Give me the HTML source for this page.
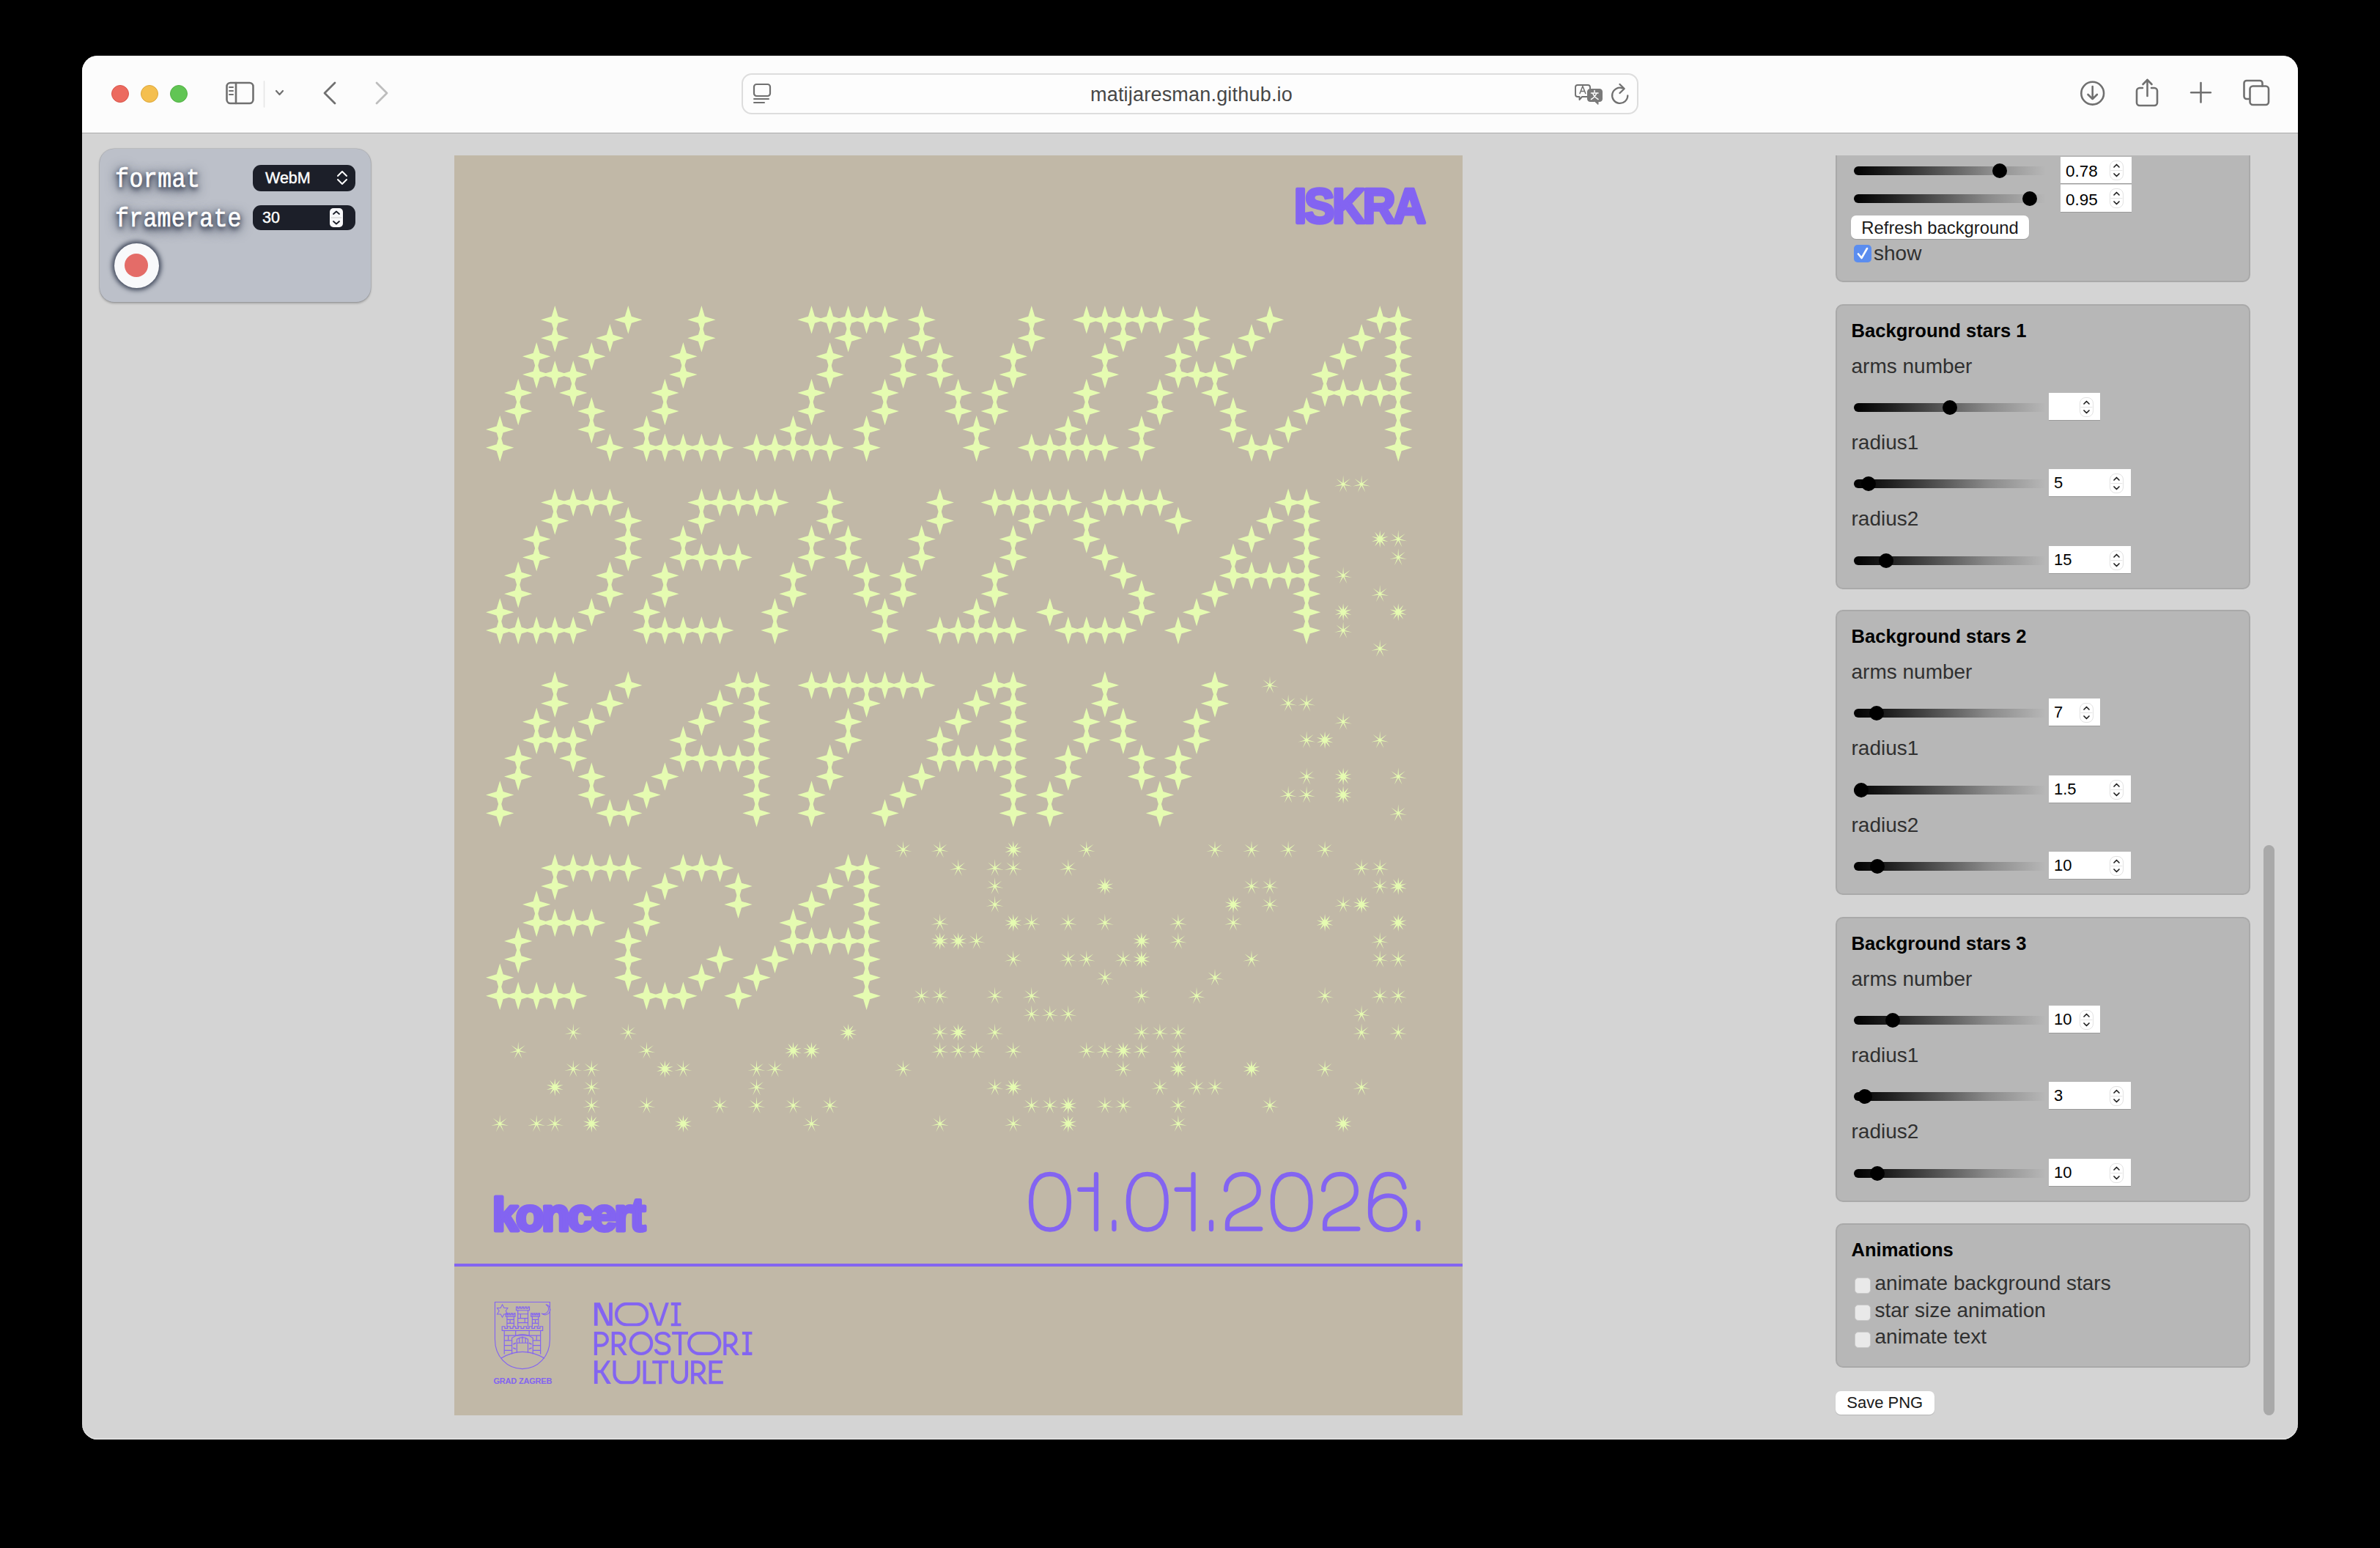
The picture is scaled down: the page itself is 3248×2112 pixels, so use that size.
<!DOCTYPE html>
<html><head><meta charset="utf-8">
<style>
*{margin:0;padding:0;box-sizing:border-box}
html,body{width:3248px;height:2112px;background:#000;overflow:hidden;font-family:"Liberation Sans",sans-serif}
.a{position:absolute}
#win{position:absolute;left:112px;top:76px;width:3024px;height:1888px;border-radius:21px;background:#D4D4D4;overflow:hidden;box-shadow:inset 0 -1.5px 0 #E6E6E6}
#tb{position:absolute;left:0;top:0;width:3024px;height:105.5px;background:#FCFCFC;border-bottom:1.5px solid #ABABAB}
.tl{position:absolute;width:24px;height:24px;border-radius:50%}
.lbl{position:absolute;font-size:28px;color:#303030;white-space:nowrap}
.hd{position:absolute;font-size:25.6px;font-weight:bold;color:#000;white-space:nowrap}
.box{position:absolute;left:2505px;width:566px;background:#B7B7B7;border:2px solid #A9A9A9;border-radius:10px}
.trk{position:absolute;left:2530px;width:262px;height:12px;border-radius:6px 0 0 6px;background:linear-gradient(90deg,#000 0%,#222 20%,#555 45%,#8a8a8a 70%,#b7b7b7 100%)}
.thm{position:absolute;width:20px;height:20px;border-radius:50%;background:#000}
.inp{position:absolute;left:2796px;height:38px;background:#fff;border-bottom:1.5px solid #9a9a9a;font-size:22px;color:#000;padding-left:7px;line-height:38px}
.spn{position:absolute;width:19px;height:27px;border-radius:8px;border:1px solid #e2e2e2;background:#fff}
.cb{position:absolute;left:2531px;width:22px;height:22px;border-radius:5px;background:#E9E9E9;border:1px solid #c8c8c8}
.mono{position:absolute;font-family:"Liberation Mono",monospace;font-size:31.5px;line-height:40px;color:#fff;white-space:nowrap;transform:scaleY(1.16);transform-origin:0 0;-webkit-text-stroke:0.6px #fff;text-shadow:0 2px 6px #2a3144,0 3px 12px #3a4256,0 3px 17px #4a5266}
</style></head><body>
<div id="win">
 <div id="tb">
  <div class="tl" style="left:40px;top:40px;background:#EC6A5F;border:1px solid #D9564B"></div>
  <div class="tl" style="left:80px;top:40px;background:#F4BF4F;border:1px solid #DDA73A"></div>
  <div class="tl" style="left:120px;top:40px;background:#61C554;border:1px solid #52AF45"></div>
 </div>
</div>
<!-- toolbar icons in page coords -->
<svg class="a" style="left:0;top:0" width="3248" height="190" viewBox="0 0 3248 190" fill="none" stroke="#707070" stroke-width="2.6" stroke-linecap="round" stroke-linejoin="round">
 <!-- sidebar -->
 <rect x="309.5" y="113" width="36" height="28" rx="5"/>
 <line x1="322" y1="113" x2="322" y2="141"/>
 <line x1="313" y1="119" x2="318" y2="119" stroke-width="2"/>
 <line x1="313" y1="124" x2="318" y2="124" stroke-width="2"/>
 <line x1="313" y1="129" x2="318" y2="129" stroke-width="2"/>
 <line x1="360.5" y1="111" x2="360.5" y2="146" stroke="#E4E4E4" stroke-width="1.5"/>
 <polyline points="377,124 381.5,129 386,124" stroke-width="2.2"/>
 <!-- back / forward -->
 <polyline points="457,113 443,127 457,141" stroke-width="2.8"/>
 <polyline points="514,113 528,127 514,141" stroke="#BDBDBD" stroke-width="2.8"/>
 <!-- url bar -->
 <rect x="1013" y="101" width="1222" height="54" rx="13" fill="#FDFDFD" stroke="#DDDDDD" stroke-width="2"/>
 <rect x="1029" y="115" width="22" height="16" rx="3.5" stroke-width="2.2"/>
 <line x1="1029" y1="135" x2="1049" y2="135" stroke-width="2"/>
 <line x1="1029" y1="140" x2="1043" y2="140" stroke-width="2"/>
 <!-- translate -->
 <path d="M2153 116 h14 a3 3 0 0 1 3 3 v10 a3 3 0 0 1 -3 3 h-8 l-3.5 4 v-4 h-2.5 a3 3 0 0 1 -3 -3 v-10 a3 3 0 0 1 3 -3z" stroke-width="1.9"/>
 <path d="M2170 121.5 h13 a3.5 3.5 0 0 1 3.5 3.5 v10 a3.5 3.5 0 0 1 -3.5 3.5 h-2 v4 l-4.5 -4 h-6.5 a3.5 3.5 0 0 1 -3.5 -3.5 v-10 a3.5 3.5 0 0 1 3.5 -3.5z" fill="#7A7A7A" stroke="#7A7A7A" stroke-width="1"/>
 <path d="M2156 127.5 l3.9 -10 l3.9 10 M2157.2 124.5 h5.4" stroke-width="1.5"/>
 <path d="M2171.5 127 h9.5 M2176 123.5 v2 M2173.5 127 q2 5 7.5 8.5 M2179 127 q-2 5 -7.5 8.5" stroke="#fff" stroke-width="1.5"/>
 <!-- reload -->
 <path d="M2221.3 130.5 a10.6 10.6 0 1 1 -7 -10.2" stroke-width="2.3"/>
 <polyline points="2210.5,115 2216.7,121 2210.5,127" stroke-width="2.3"/>
 <!-- download -->
 <circle cx="2855.7" cy="127.2" r="15.4" stroke-width="2.6"/>
 <line x1="2855.7" y1="118" x2="2855.7" y2="134.5"/>
 <polyline points="2849.5,129 2855.7,135 2861.9,129"/>
 <!-- share -->
 <path d="M2924 120 h-4 a4 4 0 0 0 -4 4 v16 a4 4 0 0 0 4 4 h20 a4 4 0 0 0 4 -4 v-16 a4 4 0 0 0 -4 -4 h-4"/>
 <line x1="2930.5" y1="109" x2="2930.5" y2="131"/>
 <polyline points="2924.5,115 2930.5,109 2936.5,115"/>
 <!-- plus -->
 <line x1="3003.5" y1="113" x2="3003.5" y2="139.5"/>
 <line x1="2990.2" y1="126.3" x2="3016.8" y2="126.3"/>
 <!-- tabs -->
 <path d="M3070 135 h-4 a3.5 3.5 0 0 1 -3.5 -3.5 v-18 a3.5 3.5 0 0 1 3.5 -3.5 h18 a3.5 3.5 0 0 1 3.5 3.5 v4"/>
 <rect x="3070.5" y="117.5" width="25.5" height="25.5" rx="4"/>
</svg>
<div class="a" style="left:1488px;top:114px;font-size:27px;color:#474747;white-space:nowrap;letter-spacing:0.2px">matijaresman.github.io</div>

<!-- left record panel -->
<div class="a" style="left:136px;top:203px;width:369.5px;height:209px;border-radius:20px;background:#BCC0C9;box-shadow:0 0 0 0.6px rgba(90,95,110,.3),0 1.5px 3px rgba(0,0,0,.25)"></div>
<div class="mono" style="left:157px;top:223px;letter-spacing:0.5px">format</div>
<div class="mono" style="left:157px;top:276.5px;letter-spacing:0.3px">framerate</div>
<div class="a" style="left:345px;top:225px;width:140px;height:36px;border-radius:11px;background:#1C1F29"></div>
<div class="a" style="left:362px;top:228px;font-size:21.5px;color:#fff;line-height:30px;-webkit-text-stroke:0.4px #fff">WebM</div>
<svg class="a" style="left:455px;top:230px" width="24" height="26" fill="none" stroke="#fff" stroke-width="2" stroke-linecap="round" stroke-linejoin="round"><polyline points="6,10 12,4 18,10"/><polyline points="6,15 12,21 18,15"/></svg>
<div class="a" style="left:345px;top:280px;width:140px;height:34px;border-radius:11px;background:#1C1F29"></div>
<div class="a" style="left:358px;top:282px;font-size:21.5px;color:#fff;line-height:30px;-webkit-text-stroke:0.4px #fff">30</div>
<div class="a" style="left:450px;top:284px;width:18px;height:26px;border-radius:5px;background:#F8F8FA"></div>
<svg class="a" style="left:450px;top:284px" width="18" height="26" fill="none" stroke="#1C1F29" stroke-width="1.8" stroke-linecap="round" stroke-linejoin="round"><polyline points="5,8 9,4.5 13,8"/><line x1="2" y1="13" x2="16" y2="13" stroke="#ccc" stroke-width="1"/><polyline points="5,18 9,21.5 13,18"/></svg>
<div class="a" style="left:155.5px;top:331.5px;width:61px;height:61px;border-radius:50%;background:#F8F9FB;box-shadow:0 0 6px 3px #3F475A"></div>
<div class="a" style="left:170px;top:346px;width:32px;height:32px;border-radius:50%;background:#E46C68"></div>

<!-- poster -->
<svg class="a" style="left:620px;top:212px" width="1376" height="1719" viewBox="620 212 1376 1719">
 <defs>
  <polygon id="s4" points="0.00,-19.20 4.45,-4.45 19.20,0.00 4.45,4.45 0.00,19.20 -4.45,4.45 -19.20,0.00 -4.45,-4.45"/>
  <polygon id="s7" points="0.00,-12.20 0.82,-1.71 9.54,-7.61 1.85,-0.42 11.89,2.71 1.49,1.18 5.29,10.99 0.00,1.90 -5.29,10.99 -1.49,1.18 -11.89,2.71 -1.85,-0.42 -9.54,-7.61 -0.82,-1.71"/>
  <polygon id="s10" points="0.00,-12.00 1.11,-3.42 7.05,-9.71 2.91,-2.12 11.41,-3.71 3.60,0.00 11.41,3.71 2.91,2.12 7.05,9.71 1.11,3.42 0.00,12.00 -1.11,3.42 -7.05,9.71 -2.91,2.12 -11.41,3.71 -3.60,0.00 -11.41,-3.71 -2.91,-2.12 -7.05,-9.71 -1.11,-3.42"/>
 </defs>
 <rect x="620" y="212" width="1376" height="1719" fill="#C1B8A7"/>
 <g fill="#E5FBB1">
<use href="#s4" x="757.3" y="436.3"/>
<use href="#s4" x="857.3" y="436.3"/>
<use href="#s4" x="957.4" y="436.3"/>
<use href="#s4" x="1107.5" y="436.3"/>
<use href="#s4" x="1132.6" y="436.3"/>
<use href="#s4" x="1157.6" y="436.3"/>
<use href="#s4" x="1182.6" y="436.3"/>
<use href="#s4" x="1207.6" y="436.3"/>
<use href="#s4" x="1257.7" y="436.3"/>
<use href="#s4" x="1407.8" y="436.3"/>
<use href="#s4" x="1482.8" y="436.3"/>
<use href="#s4" x="1507.9" y="436.3"/>
<use href="#s4" x="1532.9" y="436.3"/>
<use href="#s4" x="1557.9" y="436.3"/>
<use href="#s4" x="1582.9" y="436.3"/>
<use href="#s4" x="1633.0" y="436.3"/>
<use href="#s4" x="1733.0" y="436.3"/>
<use href="#s4" x="1883.2" y="436.3"/>
<use href="#s4" x="1908.2" y="436.3"/>
<use href="#s4" x="757.3" y="461.2"/>
<use href="#s4" x="832.3" y="461.2"/>
<use href="#s4" x="957.4" y="461.2"/>
<use href="#s4" x="1157.6" y="461.2"/>
<use href="#s4" x="1257.7" y="461.2"/>
<use href="#s4" x="1407.8" y="461.2"/>
<use href="#s4" x="1532.9" y="461.2"/>
<use href="#s4" x="1633.0" y="461.2"/>
<use href="#s4" x="1708.0" y="461.2"/>
<use href="#s4" x="1858.1" y="461.2"/>
<use href="#s4" x="1908.2" y="461.2"/>
<use href="#s4" x="732.2" y="486.2"/>
<use href="#s4" x="807.3" y="486.2"/>
<use href="#s4" x="932.4" y="486.2"/>
<use href="#s4" x="1132.6" y="486.2"/>
<use href="#s4" x="1232.6" y="486.2"/>
<use href="#s4" x="1282.7" y="486.2"/>
<use href="#s4" x="1382.8" y="486.2"/>
<use href="#s4" x="1507.9" y="486.2"/>
<use href="#s4" x="1607.9" y="486.2"/>
<use href="#s4" x="1683.0" y="486.2"/>
<use href="#s4" x="1833.1" y="486.2"/>
<use href="#s4" x="1908.2" y="486.2"/>
<use href="#s4" x="732.2" y="511.1"/>
<use href="#s4" x="757.3" y="511.1"/>
<use href="#s4" x="782.3" y="511.1"/>
<use href="#s4" x="932.4" y="511.1"/>
<use href="#s4" x="1132.6" y="511.1"/>
<use href="#s4" x="1232.6" y="511.1"/>
<use href="#s4" x="1282.7" y="511.1"/>
<use href="#s4" x="1382.8" y="511.1"/>
<use href="#s4" x="1507.9" y="511.1"/>
<use href="#s4" x="1607.9" y="511.1"/>
<use href="#s4" x="1633.0" y="511.1"/>
<use href="#s4" x="1658.0" y="511.1"/>
<use href="#s4" x="1808.1" y="511.1"/>
<use href="#s4" x="1908.2" y="511.1"/>
<use href="#s4" x="707.2" y="536.0"/>
<use href="#s4" x="782.3" y="536.0"/>
<use href="#s4" x="907.4" y="536.0"/>
<use href="#s4" x="1107.5" y="536.0"/>
<use href="#s4" x="1207.6" y="536.0"/>
<use href="#s4" x="1307.7" y="536.0"/>
<use href="#s4" x="1357.7" y="536.0"/>
<use href="#s4" x="1482.8" y="536.0"/>
<use href="#s4" x="1582.9" y="536.0"/>
<use href="#s4" x="1658.0" y="536.0"/>
<use href="#s4" x="1808.1" y="536.0"/>
<use href="#s4" x="1833.1" y="536.0"/>
<use href="#s4" x="1858.1" y="536.0"/>
<use href="#s4" x="1883.2" y="536.0"/>
<use href="#s4" x="1908.2" y="536.0"/>
<use href="#s4" x="707.2" y="561.0"/>
<use href="#s4" x="807.3" y="561.0"/>
<use href="#s4" x="907.4" y="561.0"/>
<use href="#s4" x="1107.5" y="561.0"/>
<use href="#s4" x="1207.6" y="561.0"/>
<use href="#s4" x="1307.7" y="561.0"/>
<use href="#s4" x="1357.7" y="561.0"/>
<use href="#s4" x="1482.8" y="561.0"/>
<use href="#s4" x="1582.9" y="561.0"/>
<use href="#s4" x="1683.0" y="561.0"/>
<use href="#s4" x="1783.1" y="561.0"/>
<use href="#s4" x="1908.2" y="561.0"/>
<use href="#s4" x="682.2" y="585.9"/>
<use href="#s4" x="807.3" y="585.9"/>
<use href="#s4" x="882.4" y="585.9"/>
<use href="#s4" x="1082.5" y="585.9"/>
<use href="#s4" x="1182.6" y="585.9"/>
<use href="#s4" x="1332.7" y="585.9"/>
<use href="#s4" x="1457.8" y="585.9"/>
<use href="#s4" x="1557.9" y="585.9"/>
<use href="#s4" x="1683.0" y="585.9"/>
<use href="#s4" x="1758.1" y="585.9"/>
<use href="#s4" x="1908.2" y="585.9"/>
<use href="#s4" x="682.2" y="610.8"/>
<use href="#s4" x="832.3" y="610.8"/>
<use href="#s4" x="882.4" y="610.8"/>
<use href="#s4" x="907.4" y="610.8"/>
<use href="#s4" x="932.4" y="610.8"/>
<use href="#s4" x="957.4" y="610.8"/>
<use href="#s4" x="982.4" y="610.8"/>
<use href="#s4" x="1032.5" y="610.8"/>
<use href="#s4" x="1057.5" y="610.8"/>
<use href="#s4" x="1082.5" y="610.8"/>
<use href="#s4" x="1107.5" y="610.8"/>
<use href="#s4" x="1132.6" y="610.8"/>
<use href="#s4" x="1182.6" y="610.8"/>
<use href="#s4" x="1332.7" y="610.8"/>
<use href="#s4" x="1407.8" y="610.8"/>
<use href="#s4" x="1432.8" y="610.8"/>
<use href="#s4" x="1457.8" y="610.8"/>
<use href="#s4" x="1482.8" y="610.8"/>
<use href="#s4" x="1507.9" y="610.8"/>
<use href="#s4" x="1557.9" y="610.8"/>
<use href="#s4" x="1708.0" y="610.8"/>
<use href="#s4" x="1733.0" y="610.8"/>
<use href="#s4" x="1908.2" y="610.8"/>
<use href="#s4" x="757.3" y="685.6"/>
<use href="#s4" x="782.3" y="685.6"/>
<use href="#s4" x="807.3" y="685.6"/>
<use href="#s4" x="832.3" y="685.6"/>
<use href="#s4" x="957.4" y="685.6"/>
<use href="#s4" x="982.4" y="685.6"/>
<use href="#s4" x="1007.5" y="685.6"/>
<use href="#s4" x="1032.5" y="685.6"/>
<use href="#s4" x="1057.5" y="685.6"/>
<use href="#s4" x="1132.6" y="685.6"/>
<use href="#s4" x="1282.7" y="685.6"/>
<use href="#s4" x="1357.7" y="685.6"/>
<use href="#s4" x="1382.8" y="685.6"/>
<use href="#s4" x="1407.8" y="685.6"/>
<use href="#s4" x="1432.8" y="685.6"/>
<use href="#s4" x="1457.8" y="685.6"/>
<use href="#s4" x="1507.9" y="685.6"/>
<use href="#s4" x="1532.9" y="685.6"/>
<use href="#s4" x="1557.9" y="685.6"/>
<use href="#s4" x="1582.9" y="685.6"/>
<use href="#s4" x="1758.1" y="685.6"/>
<use href="#s4" x="1783.1" y="685.6"/>
<use href="#s4" x="757.3" y="710.5"/>
<use href="#s4" x="857.3" y="710.5"/>
<use href="#s4" x="957.4" y="710.5"/>
<use href="#s4" x="1132.6" y="710.5"/>
<use href="#s4" x="1282.7" y="710.5"/>
<use href="#s4" x="1407.8" y="710.5"/>
<use href="#s4" x="1482.8" y="710.5"/>
<use href="#s4" x="1607.9" y="710.5"/>
<use href="#s4" x="1733.0" y="710.5"/>
<use href="#s4" x="1783.1" y="710.5"/>
<use href="#s4" x="732.2" y="735.5"/>
<use href="#s4" x="857.3" y="735.5"/>
<use href="#s4" x="932.4" y="735.5"/>
<use href="#s4" x="1107.5" y="735.5"/>
<use href="#s4" x="1157.6" y="735.5"/>
<use href="#s4" x="1257.7" y="735.5"/>
<use href="#s4" x="1382.8" y="735.5"/>
<use href="#s4" x="1482.8" y="735.5"/>
<use href="#s4" x="1708.0" y="735.5"/>
<use href="#s4" x="1783.1" y="735.5"/>
<use href="#s4" x="732.2" y="760.4"/>
<use href="#s4" x="857.3" y="760.4"/>
<use href="#s4" x="932.4" y="760.4"/>
<use href="#s4" x="957.4" y="760.4"/>
<use href="#s4" x="982.4" y="760.4"/>
<use href="#s4" x="1007.5" y="760.4"/>
<use href="#s4" x="1107.5" y="760.4"/>
<use href="#s4" x="1157.6" y="760.4"/>
<use href="#s4" x="1257.7" y="760.4"/>
<use href="#s4" x="1382.8" y="760.4"/>
<use href="#s4" x="1507.9" y="760.4"/>
<use href="#s4" x="1683.0" y="760.4"/>
<use href="#s4" x="1783.1" y="760.4"/>
<use href="#s4" x="707.2" y="785.3"/>
<use href="#s4" x="832.3" y="785.3"/>
<use href="#s4" x="907.4" y="785.3"/>
<use href="#s4" x="1082.5" y="785.3"/>
<use href="#s4" x="1182.6" y="785.3"/>
<use href="#s4" x="1232.6" y="785.3"/>
<use href="#s4" x="1357.7" y="785.3"/>
<use href="#s4" x="1532.9" y="785.3"/>
<use href="#s4" x="1683.0" y="785.3"/>
<use href="#s4" x="1708.0" y="785.3"/>
<use href="#s4" x="1733.0" y="785.3"/>
<use href="#s4" x="1758.1" y="785.3"/>
<use href="#s4" x="1783.1" y="785.3"/>
<use href="#s4" x="707.2" y="810.2"/>
<use href="#s4" x="832.3" y="810.2"/>
<use href="#s4" x="907.4" y="810.2"/>
<use href="#s4" x="1082.5" y="810.2"/>
<use href="#s4" x="1182.6" y="810.2"/>
<use href="#s4" x="1232.6" y="810.2"/>
<use href="#s4" x="1357.7" y="810.2"/>
<use href="#s4" x="1557.9" y="810.2"/>
<use href="#s4" x="1658.0" y="810.2"/>
<use href="#s4" x="1783.1" y="810.2"/>
<use href="#s4" x="682.2" y="835.2"/>
<use href="#s4" x="807.3" y="835.2"/>
<use href="#s4" x="882.4" y="835.2"/>
<use href="#s4" x="1057.5" y="835.2"/>
<use href="#s4" x="1207.6" y="835.2"/>
<use href="#s4" x="1332.7" y="835.2"/>
<use href="#s4" x="1432.8" y="835.2"/>
<use href="#s4" x="1557.9" y="835.2"/>
<use href="#s4" x="1633.0" y="835.2"/>
<use href="#s4" x="1783.1" y="835.2"/>
<use href="#s4" x="682.2" y="860.1"/>
<use href="#s4" x="707.2" y="860.1"/>
<use href="#s4" x="732.2" y="860.1"/>
<use href="#s4" x="757.3" y="860.1"/>
<use href="#s4" x="782.3" y="860.1"/>
<use href="#s4" x="882.4" y="860.1"/>
<use href="#s4" x="907.4" y="860.1"/>
<use href="#s4" x="932.4" y="860.1"/>
<use href="#s4" x="957.4" y="860.1"/>
<use href="#s4" x="982.4" y="860.1"/>
<use href="#s4" x="1057.5" y="860.1"/>
<use href="#s4" x="1207.6" y="860.1"/>
<use href="#s4" x="1282.7" y="860.1"/>
<use href="#s4" x="1307.7" y="860.1"/>
<use href="#s4" x="1332.7" y="860.1"/>
<use href="#s4" x="1357.7" y="860.1"/>
<use href="#s4" x="1382.8" y="860.1"/>
<use href="#s4" x="1457.8" y="860.1"/>
<use href="#s4" x="1482.8" y="860.1"/>
<use href="#s4" x="1507.9" y="860.1"/>
<use href="#s4" x="1532.9" y="860.1"/>
<use href="#s4" x="1607.9" y="860.1"/>
<use href="#s4" x="1783.1" y="860.1"/>
<use href="#s4" x="757.3" y="934.9"/>
<use href="#s4" x="857.3" y="934.9"/>
<use href="#s4" x="1007.5" y="934.9"/>
<use href="#s4" x="1032.5" y="934.9"/>
<use href="#s4" x="1107.5" y="934.9"/>
<use href="#s4" x="1132.6" y="934.9"/>
<use href="#s4" x="1157.6" y="934.9"/>
<use href="#s4" x="1182.6" y="934.9"/>
<use href="#s4" x="1207.6" y="934.9"/>
<use href="#s4" x="1232.6" y="934.9"/>
<use href="#s4" x="1257.7" y="934.9"/>
<use href="#s4" x="1357.7" y="934.9"/>
<use href="#s4" x="1382.8" y="934.9"/>
<use href="#s4" x="1507.9" y="934.9"/>
<use href="#s4" x="1658.0" y="934.9"/>
<use href="#s4" x="757.3" y="959.8"/>
<use href="#s4" x="832.3" y="959.8"/>
<use href="#s4" x="982.4" y="959.8"/>
<use href="#s4" x="1032.5" y="959.8"/>
<use href="#s4" x="1182.6" y="959.8"/>
<use href="#s4" x="1332.7" y="959.8"/>
<use href="#s4" x="1382.8" y="959.8"/>
<use href="#s4" x="1507.9" y="959.8"/>
<use href="#s4" x="1658.0" y="959.8"/>
<use href="#s4" x="732.2" y="984.8"/>
<use href="#s4" x="807.3" y="984.8"/>
<use href="#s4" x="957.4" y="984.8"/>
<use href="#s4" x="1032.5" y="984.8"/>
<use href="#s4" x="1157.6" y="984.8"/>
<use href="#s4" x="1307.7" y="984.8"/>
<use href="#s4" x="1382.8" y="984.8"/>
<use href="#s4" x="1482.8" y="984.8"/>
<use href="#s4" x="1532.9" y="984.8"/>
<use href="#s4" x="1633.0" y="984.8"/>
<use href="#s4" x="732.2" y="1009.7"/>
<use href="#s4" x="757.3" y="1009.7"/>
<use href="#s4" x="782.3" y="1009.7"/>
<use href="#s4" x="932.4" y="1009.7"/>
<use href="#s4" x="1032.5" y="1009.7"/>
<use href="#s4" x="1157.6" y="1009.7"/>
<use href="#s4" x="1282.7" y="1009.7"/>
<use href="#s4" x="1382.8" y="1009.7"/>
<use href="#s4" x="1482.8" y="1009.7"/>
<use href="#s4" x="1532.9" y="1009.7"/>
<use href="#s4" x="1633.0" y="1009.7"/>
<use href="#s4" x="707.2" y="1034.6"/>
<use href="#s4" x="782.3" y="1034.6"/>
<use href="#s4" x="932.4" y="1034.6"/>
<use href="#s4" x="957.4" y="1034.6"/>
<use href="#s4" x="982.4" y="1034.6"/>
<use href="#s4" x="1007.5" y="1034.6"/>
<use href="#s4" x="1032.5" y="1034.6"/>
<use href="#s4" x="1132.6" y="1034.6"/>
<use href="#s4" x="1282.7" y="1034.6"/>
<use href="#s4" x="1307.7" y="1034.6"/>
<use href="#s4" x="1332.7" y="1034.6"/>
<use href="#s4" x="1357.7" y="1034.6"/>
<use href="#s4" x="1382.8" y="1034.6"/>
<use href="#s4" x="1457.8" y="1034.6"/>
<use href="#s4" x="1557.9" y="1034.6"/>
<use href="#s4" x="1607.9" y="1034.6"/>
<use href="#s4" x="707.2" y="1059.5"/>
<use href="#s4" x="807.3" y="1059.5"/>
<use href="#s4" x="907.4" y="1059.5"/>
<use href="#s4" x="1032.5" y="1059.5"/>
<use href="#s4" x="1132.6" y="1059.5"/>
<use href="#s4" x="1257.7" y="1059.5"/>
<use href="#s4" x="1382.8" y="1059.5"/>
<use href="#s4" x="1457.8" y="1059.5"/>
<use href="#s4" x="1557.9" y="1059.5"/>
<use href="#s4" x="1607.9" y="1059.5"/>
<use href="#s4" x="682.2" y="1084.5"/>
<use href="#s4" x="807.3" y="1084.5"/>
<use href="#s4" x="882.4" y="1084.5"/>
<use href="#s4" x="1032.5" y="1084.5"/>
<use href="#s4" x="1107.5" y="1084.5"/>
<use href="#s4" x="1232.6" y="1084.5"/>
<use href="#s4" x="1382.8" y="1084.5"/>
<use href="#s4" x="1432.8" y="1084.5"/>
<use href="#s4" x="1582.9" y="1084.5"/>
<use href="#s4" x="682.2" y="1109.4"/>
<use href="#s4" x="832.3" y="1109.4"/>
<use href="#s4" x="857.3" y="1109.4"/>
<use href="#s4" x="1032.5" y="1109.4"/>
<use href="#s4" x="1107.5" y="1109.4"/>
<use href="#s4" x="1207.6" y="1109.4"/>
<use href="#s4" x="1382.8" y="1109.4"/>
<use href="#s4" x="1432.8" y="1109.4"/>
<use href="#s4" x="1582.9" y="1109.4"/>
<use href="#s4" x="757.3" y="1184.2"/>
<use href="#s4" x="782.3" y="1184.2"/>
<use href="#s4" x="807.3" y="1184.2"/>
<use href="#s4" x="832.3" y="1184.2"/>
<use href="#s4" x="857.3" y="1184.2"/>
<use href="#s4" x="932.4" y="1184.2"/>
<use href="#s4" x="957.4" y="1184.2"/>
<use href="#s4" x="982.4" y="1184.2"/>
<use href="#s4" x="1157.6" y="1184.2"/>
<use href="#s4" x="1182.6" y="1184.2"/>
<use href="#s4" x="757.3" y="1209.1"/>
<use href="#s4" x="907.4" y="1209.1"/>
<use href="#s4" x="1007.5" y="1209.1"/>
<use href="#s4" x="1132.6" y="1209.1"/>
<use href="#s4" x="1182.6" y="1209.1"/>
<use href="#s4" x="732.2" y="1234.1"/>
<use href="#s4" x="882.4" y="1234.1"/>
<use href="#s4" x="1007.5" y="1234.1"/>
<use href="#s4" x="1107.5" y="1234.1"/>
<use href="#s4" x="1182.6" y="1234.1"/>
<use href="#s4" x="732.2" y="1259.0"/>
<use href="#s4" x="757.3" y="1259.0"/>
<use href="#s4" x="782.3" y="1259.0"/>
<use href="#s4" x="807.3" y="1259.0"/>
<use href="#s4" x="882.4" y="1259.0"/>
<use href="#s4" x="1082.5" y="1259.0"/>
<use href="#s4" x="1182.6" y="1259.0"/>
<use href="#s4" x="707.2" y="1283.9"/>
<use href="#s4" x="857.3" y="1283.9"/>
<use href="#s4" x="1082.5" y="1283.9"/>
<use href="#s4" x="1107.5" y="1283.9"/>
<use href="#s4" x="1132.6" y="1283.9"/>
<use href="#s4" x="1157.6" y="1283.9"/>
<use href="#s4" x="1182.6" y="1283.9"/>
<use href="#s4" x="707.2" y="1308.8"/>
<use href="#s4" x="857.3" y="1308.8"/>
<use href="#s4" x="982.4" y="1308.8"/>
<use href="#s4" x="1057.5" y="1308.8"/>
<use href="#s4" x="1182.6" y="1308.8"/>
<use href="#s4" x="682.2" y="1333.8"/>
<use href="#s4" x="857.3" y="1333.8"/>
<use href="#s4" x="957.4" y="1333.8"/>
<use href="#s4" x="1032.5" y="1333.8"/>
<use href="#s4" x="1182.6" y="1333.8"/>
<use href="#s4" x="682.2" y="1358.7"/>
<use href="#s4" x="707.2" y="1358.7"/>
<use href="#s4" x="732.2" y="1358.7"/>
<use href="#s4" x="757.3" y="1358.7"/>
<use href="#s4" x="782.3" y="1358.7"/>
<use href="#s4" x="882.4" y="1358.7"/>
<use href="#s4" x="907.4" y="1358.7"/>
<use href="#s4" x="932.4" y="1358.7"/>
<use href="#s4" x="1007.5" y="1358.7"/>
<use href="#s4" x="1182.6" y="1358.7"/>
<use href="#s7" x="1833.1" y="660.7"/>
<use href="#s7" x="1858.1" y="660.7"/>
<use href="#s10" x="1883.2" y="735.5"/>
<use href="#s7" x="1908.2" y="735.5"/>
<use href="#s7" x="1908.2" y="760.4"/>
<use href="#s7" x="1833.1" y="785.3"/>
<use href="#s7" x="1883.2" y="810.2"/>
<use href="#s10" x="1833.1" y="835.2"/>
<use href="#s10" x="1908.2" y="835.2"/>
<use href="#s7" x="1833.1" y="860.1"/>
<use href="#s7" x="1883.2" y="885.0"/>
<use href="#s7" x="1733.0" y="934.9"/>
<use href="#s7" x="1758.1" y="959.8"/>
<use href="#s7" x="1783.1" y="959.8"/>
<use href="#s7" x="1833.1" y="984.8"/>
<use href="#s7" x="1783.1" y="1009.7"/>
<use href="#s10" x="1808.1" y="1009.7"/>
<use href="#s7" x="1883.2" y="1009.7"/>
<use href="#s7" x="1783.1" y="1059.5"/>
<use href="#s10" x="1833.1" y="1059.5"/>
<use href="#s7" x="1908.2" y="1059.5"/>
<use href="#s7" x="1758.1" y="1084.5"/>
<use href="#s7" x="1783.1" y="1084.5"/>
<use href="#s10" x="1833.1" y="1084.5"/>
<use href="#s7" x="1908.2" y="1109.4"/>
<use href="#s7" x="1232.6" y="1159.3"/>
<use href="#s7" x="1282.7" y="1159.3"/>
<use href="#s10" x="1382.8" y="1159.3"/>
<use href="#s7" x="1482.8" y="1159.3"/>
<use href="#s7" x="1658.0" y="1159.3"/>
<use href="#s7" x="1708.0" y="1159.3"/>
<use href="#s7" x="1758.1" y="1159.3"/>
<use href="#s7" x="1808.1" y="1159.3"/>
<use href="#s7" x="1307.7" y="1184.2"/>
<use href="#s7" x="1357.7" y="1184.2"/>
<use href="#s7" x="1382.8" y="1184.2"/>
<use href="#s7" x="1457.8" y="1184.2"/>
<use href="#s7" x="1858.1" y="1184.2"/>
<use href="#s7" x="1883.2" y="1184.2"/>
<use href="#s7" x="1357.7" y="1209.1"/>
<use href="#s10" x="1507.9" y="1209.1"/>
<use href="#s7" x="1708.0" y="1209.1"/>
<use href="#s7" x="1733.0" y="1209.1"/>
<use href="#s7" x="1883.2" y="1209.1"/>
<use href="#s10" x="1908.2" y="1209.1"/>
<use href="#s7" x="1357.7" y="1234.1"/>
<use href="#s10" x="1683.0" y="1234.1"/>
<use href="#s7" x="1733.0" y="1234.1"/>
<use href="#s7" x="1833.1" y="1234.1"/>
<use href="#s10" x="1858.1" y="1234.1"/>
<use href="#s7" x="1282.7" y="1259.0"/>
<use href="#s10" x="1382.8" y="1259.0"/>
<use href="#s7" x="1407.8" y="1259.0"/>
<use href="#s7" x="1457.8" y="1259.0"/>
<use href="#s7" x="1507.9" y="1259.0"/>
<use href="#s7" x="1607.9" y="1259.0"/>
<use href="#s7" x="1683.0" y="1259.0"/>
<use href="#s10" x="1808.1" y="1259.0"/>
<use href="#s10" x="1908.2" y="1259.0"/>
<use href="#s10" x="1282.7" y="1283.9"/>
<use href="#s10" x="1307.7" y="1283.9"/>
<use href="#s7" x="1332.7" y="1283.9"/>
<use href="#s10" x="1557.9" y="1283.9"/>
<use href="#s7" x="1607.9" y="1283.9"/>
<use href="#s7" x="1883.2" y="1283.9"/>
<use href="#s7" x="1382.8" y="1308.8"/>
<use href="#s7" x="1457.8" y="1308.8"/>
<use href="#s7" x="1482.8" y="1308.8"/>
<use href="#s7" x="1532.9" y="1308.8"/>
<use href="#s10" x="1557.9" y="1308.8"/>
<use href="#s7" x="1708.0" y="1308.8"/>
<use href="#s7" x="1883.2" y="1308.8"/>
<use href="#s7" x="1908.2" y="1308.8"/>
<use href="#s7" x="1507.9" y="1333.8"/>
<use href="#s7" x="1658.0" y="1333.8"/>
<use href="#s7" x="1257.7" y="1358.7"/>
<use href="#s7" x="1282.7" y="1358.7"/>
<use href="#s7" x="1357.7" y="1358.7"/>
<use href="#s7" x="1407.8" y="1358.7"/>
<use href="#s7" x="1557.9" y="1358.7"/>
<use href="#s7" x="1633.0" y="1358.7"/>
<use href="#s7" x="1808.1" y="1358.7"/>
<use href="#s7" x="1883.2" y="1358.7"/>
<use href="#s7" x="1908.2" y="1358.7"/>
<use href="#s7" x="1407.8" y="1383.6"/>
<use href="#s7" x="1432.8" y="1383.6"/>
<use href="#s7" x="1457.8" y="1383.6"/>
<use href="#s7" x="1858.1" y="1383.6"/>
<use href="#s7" x="782.3" y="1408.6"/>
<use href="#s7" x="857.3" y="1408.6"/>
<use href="#s10" x="1157.6" y="1408.6"/>
<use href="#s7" x="1282.7" y="1408.6"/>
<use href="#s10" x="1307.7" y="1408.6"/>
<use href="#s7" x="1357.7" y="1408.6"/>
<use href="#s7" x="1557.9" y="1408.6"/>
<use href="#s7" x="1582.9" y="1408.6"/>
<use href="#s7" x="1607.9" y="1408.6"/>
<use href="#s7" x="1858.1" y="1408.6"/>
<use href="#s7" x="1908.2" y="1408.6"/>
<use href="#s7" x="707.2" y="1433.5"/>
<use href="#s7" x="882.4" y="1433.5"/>
<use href="#s10" x="1082.5" y="1433.5"/>
<use href="#s10" x="1107.5" y="1433.5"/>
<use href="#s7" x="1282.7" y="1433.5"/>
<use href="#s7" x="1307.7" y="1433.5"/>
<use href="#s7" x="1332.7" y="1433.5"/>
<use href="#s7" x="1382.8" y="1433.5"/>
<use href="#s7" x="1482.8" y="1433.5"/>
<use href="#s7" x="1507.9" y="1433.5"/>
<use href="#s10" x="1532.9" y="1433.5"/>
<use href="#s7" x="1557.9" y="1433.5"/>
<use href="#s7" x="1607.9" y="1433.5"/>
<use href="#s7" x="782.3" y="1458.4"/>
<use href="#s7" x="807.3" y="1458.4"/>
<use href="#s10" x="907.4" y="1458.4"/>
<use href="#s7" x="932.4" y="1458.4"/>
<use href="#s7" x="1032.5" y="1458.4"/>
<use href="#s7" x="1057.5" y="1458.4"/>
<use href="#s7" x="1232.6" y="1458.4"/>
<use href="#s7" x="1532.9" y="1458.4"/>
<use href="#s10" x="1607.9" y="1458.4"/>
<use href="#s10" x="1708.0" y="1458.4"/>
<use href="#s7" x="1808.1" y="1458.4"/>
<use href="#s10" x="757.3" y="1483.4"/>
<use href="#s7" x="807.3" y="1483.4"/>
<use href="#s7" x="1032.5" y="1483.4"/>
<use href="#s7" x="1357.7" y="1483.4"/>
<use href="#s10" x="1382.8" y="1483.4"/>
<use href="#s7" x="1582.9" y="1483.4"/>
<use href="#s7" x="1633.0" y="1483.4"/>
<use href="#s7" x="1658.0" y="1483.4"/>
<use href="#s7" x="1858.1" y="1483.4"/>
<use href="#s7" x="807.3" y="1508.3"/>
<use href="#s7" x="882.4" y="1508.3"/>
<use href="#s7" x="982.4" y="1508.3"/>
<use href="#s7" x="1032.5" y="1508.3"/>
<use href="#s7" x="1082.5" y="1508.3"/>
<use href="#s7" x="1132.6" y="1508.3"/>
<use href="#s7" x="1407.8" y="1508.3"/>
<use href="#s7" x="1432.8" y="1508.3"/>
<use href="#s10" x="1457.8" y="1508.3"/>
<use href="#s7" x="1507.9" y="1508.3"/>
<use href="#s7" x="1532.9" y="1508.3"/>
<use href="#s7" x="1607.9" y="1508.3"/>
<use href="#s7" x="1733.0" y="1508.3"/>
<use href="#s7" x="682.2" y="1533.2"/>
<use href="#s7" x="732.2" y="1533.2"/>
<use href="#s7" x="757.3" y="1533.2"/>
<use href="#s10" x="807.3" y="1533.2"/>
<use href="#s10" x="932.4" y="1533.2"/>
<use href="#s7" x="1107.5" y="1533.2"/>
<use href="#s7" x="1282.7" y="1533.2"/>
<use href="#s7" x="1382.8" y="1533.2"/>
<use href="#s10" x="1457.8" y="1533.2"/>
<use href="#s7" x="1607.9" y="1533.2"/>
<use href="#s10" x="1833.1" y="1533.2"/>
 </g>
 <g fill="#8364F1" stroke="#8364F1" stroke-linejoin="round">
  <text transform="translate(1766 304.4) scale(1 1.075)" x="0" y="0" font-family="Liberation Sans" font-weight="bold" font-size="62" letter-spacing="-3.2" stroke-width="4">ISKRA</text>
  <text x="672" y="1679" font-family="Liberation Sans" font-weight="bold" font-size="63" letter-spacing="-3.1" stroke-width="5">koncert</text>
 </g>
 <rect x="620" y="1724" width="1376" height="4" fill="#8364F1"/>
 <!-- date -->
 <g transform="translate(1380 1580) scale(0.25208)" fill="none" stroke="#8364F1" stroke-width="25" stroke-linecap="round" stroke-linejoin="round">
  <path d="M210 87 C275.92 87 313 141 313 237 C313 333 275.92 387 210 387 C144.08 387 107 333 107 237 C107 141 144.08 87 210 87 Z"/>
  <path d="M460 385 V88 M370 170 H460"/>
  <path d="M557 347 V385"/>
  <path d="M737 87 C802.92 87 840 141 840 237 C840 333 802.92 387 737 387 C671.08 387 634 333 634 237 C634 141 671.08 87 737 87 Z"/>
  <path d="M986 385 V88 M895 170 H986"/>
  <path d="M1083 347 V385"/>
  <path d="M1162 172 C1162 118 1202 87 1255 87 C1305 87 1340 122 1340 178 C1340 238 1288 258 1250 274 C1200 296 1170 312 1170 358 V383 H1350"/>
  <path d="M1518 87 C1583.92 87 1621 141 1621 237 C1621 333 1583.92 387 1518 387 C1452.08 387 1415 333 1415 237 C1415 141 1452.08 87 1518 87 Z"/>
  <path d="M1690 172 C1690 118 1730 87 1783 87 C1833 87 1868 122 1868 178 C1868 238 1816 258 1778 274 C1728 296 1698 312 1698 358 V383 H1878"/>
  <path d="M2128 158 C2118 110 2085 87 2040 87 C1975 87 1944 160 1944 265 L1944 300 C1944 352 1985 388 2040 388 C2095 388 2132 348 2132 296 C2132 242 2094 204 2042 204 C1998 204 1962 228 1946 266"/>
  <path d="M2203 347 V385"/>
 </g>
 
<clipPath id="npk"><rect x="800" y="1776.8" width="240" height="32.8"/><rect x="800" y="1816.6" width="240" height="32.4"/><rect x="800" y="1856.1" width="240" height="32.5"/></clipPath>
<g clip-path="url(#npk)"><g transform="translate(660 1760) scale(0.168067)" fill="none" stroke="#8364F1" stroke-width="25" stroke-linecap="butt" stroke-linejoin="miter">
 <path d="M897.9 101.9 H944.3 L1018.2 260.6 V101.9 H1046.1 V290.4 H1000.9 L925.8 137.6 V290.4 H897.9 Z" fill="#8364F1" stroke="none"/>
 <rect x="1077.5" y="112.5" width="250" height="170" rx="85"/>
 <path d="M1340 101.9 H1366.8 L1424 266.5 L1478 101.9 H1505 L1442 290.4 H1406 Z" fill="#8364F1" stroke="none"/>
 <path d="M1522 112.5 H1603 M1562 112.5 V282.5 M1522 282.5 H1603"/>
 <path d="M910 530 V349.5 H955 A50 50 0 0 1 955 449.5 H910"/>
 <path d="M1052 530 V349.5 H1095 A50 50 0 0 1 1095 449.5 H1052 M1095 449.5 L1162 545"/>
 <circle cx="1278.6" cy="432.6" r="85"/>
 <path d="M1508 385 C1500 360 1480 349.5 1455 349.5 C1420 349.5 1402 368 1402 392 C1402 420 1430 428 1460 434 C1492 440 1508 452 1508 478 C1508 505 1485 517.5 1455 517.5 C1425 517.5 1402 505 1396 480"/>
 <path d="M1530 349.5 H1660 M1595 349.5 V530"/>
 <rect x="1667.5" y="349.5" width="250" height="168" rx="84"/>
 <path d="M1960 530 V349.5 H2000 A50 50 0 0 1 2000 449.5 H1960 M2000 449.5 L2072 545"/>
 <path d="M2100 349.5 H2180 M2140 349.5 V517.5 M2100 517.5 H2180"/>
 <path d="M897.9 572.5 H925.8 V650.5 H950 L1004 572.5 H1031 L972.2 662.5 L1035.7 761.5 H1000.9 L950 674.5 H925.8 V761.5 H897.9 Z" fill="#8364F1" stroke="none"/>
 <path d="M1062 572 V680 A72 72 0 0 0 1134 752.5 H1186 A72 72 0 0 0 1258 680 V572"/>
 <path d="M1307 572 V752.5 H1398"/>
 <path d="M1370 584.5 H1500 M1435 584.5 V765"/>
 <path d="M1534 572 V690 A57 62 0 0 0 1648 690 V572"/>
 <path d="M1697 765 V584.5 H1740 A50 50 0 0 1 1740 684.5 H1697 M1740 684.5 L1812 780"/>
 <path d="M1940 584.5 H1842 V752.5 H1945 M1842 662 H1928"/>
</g></g>
<g transform="translate(660 1760) scale(0.168067)" fill="none" stroke="#8364F1" stroke-width="7">
 <path d="M92 98 H538 V400 C538 540 440 640 315 640 C190 640 92 540 92 400 Z"/>
 <path d="M140 555 Q315 450 495 555"/>
 <path d="M152 118 L166 146 L196 146 L180 170 L196 196 L166 196 L152 222 L138 196 L110 196 L126 170 L110 146 L138 146 Z" stroke-width="6"/>
 <path d="M505 118 A42 42 0 1 1 470 190 A36 36 0 1 0 505 118 Z" stroke-width="6"/>
 <path d="M180.0 215.0 V190.0 H190.9 V201.2 H201.7 V190.0 H212.6 V201.2 H223.4 V190.0 H234.3 V201.2 H245.1 V190.0 H256.0 V201.2 V215.0 Z"/>
 <path d="M265.0 165.0 V138.0 H276.9 V150.2 H288.8 V138.0 H300.7 V150.2 H312.6 V138.0 H324.4 V150.2 H336.3 V138.0 H348.2 V150.2 H360.1 V138.0 H372.0 V150.2 V165.0 Z"/>
 <path d="M385.0 215.0 V190.0 H395.0 V201.2 H405.0 V190.0 H415.0 V201.2 H425.0 V190.0 H435.0 V201.2 H445.0 V190.0 H455.0 V201.2 V215.0 Z"/>
 <path d="M150.0 330.0 V296.0 H172.0 V311.3 H194.0 V296.0 H216.0 V311.3 H238.0 V296.0 H260.0 V311.3 H282.0 V296.0 H304.0 V311.3 H326.0 V296.0 H348.0 V311.3 H370.0 V296.0 H392.0 V311.3 H414.0 V296.0 H436.0 V311.3 H458.0 V296.0 H480.0 V311.3 V330.0 Z"/>
 <path d="M168 330 V520 M462 330 V520 M190 212 V300 M246 212 V300 M278 165 V300 M360 165 V300 M395 212 V300 M445 212 V300"/>
 <path d="M168 370 H462 M168 410 H230 M400 410 H462 M168 450 H230 M400 450 H462 M168 490 H230 M400 490 H462 M190 240 H246 M190 270 H246 M278 195 H360 M278 230 H360 M278 265 H360 M395 240 H445 M395 270 H445 M215 240 V270 M300 195 V230 M335 230 V265 M420 240 V270 M200 370 V410 M260 330 V370 M370 330 V370 M430 370 V410"/>
 <path d="M230 520 V390 Q315 330 400 390 V520"/>
 <path d="M270 510 V400 Q315 370 360 400 V510 M290 385 V430 M315 378 V430 M340 385 V430 M270 430 H360"/>
 <path d="M240 440 L262 430 M240 470 L262 480 M390 440 L368 430 M390 470 L368 480" stroke-width="9"/>
</g>
<text x="673.5" y="1887.8" font-family="Liberation Sans" font-weight="bold" font-size="11" letter-spacing="-0.2" fill="#8364F1">GRAD ZAGREB</text>

</svg>

<!-- right panel -->
<div class="a" style="left:2500px;top:212px;width:580px;height:180px;overflow:hidden"><div class="box" style="left:5px;top:-30px;height:203px"></div></div>
<div class="trk" style="top:227px"></div><div class="thm" style="left:2718.5px;top:223px"></div>
<div class="trk" style="top:265px"></div><div class="thm" style="left:2759.5px;top:261px"></div>
<div class="inp" style="left:2812px;top:214px;width:97px;height:37px;line-height:40px;font-size:22.5px;padding-left:7px">0.78</div>
<div class="inp" style="left:2812px;top:251px;width:97px;height:39px;line-height:41px;font-size:22.5px;padding-left:7px;border-top:1px solid #d0d0d0">0.95</div>
<div class="spn" style="left:2879px;top:219px;height:27px"></div>
<svg class="a" style="left:2879px;top:219px" width="19" height="27" fill="none" stroke="#222" stroke-width="1.7" stroke-linecap="round" stroke-linejoin="round"><polyline points="6,9 9.5,5.5 13,9"/><line x1="2" y1="13.5" x2="17" y2="13.5" stroke="#e4e4e4" stroke-width="1"/><polyline points="6,18 9.5,21.5 13,18"/></svg>
<div class="spn" style="left:2879px;top:257px;height:27px"></div>
<svg class="a" style="left:2879px;top:257px" width="19" height="27" fill="none" stroke="#222" stroke-width="1.7" stroke-linecap="round" stroke-linejoin="round"><polyline points="6,9 9.5,5.5 13,9"/><line x1="2" y1="13.5" x2="17" y2="13.5" stroke="#e4e4e4" stroke-width="1"/><polyline points="6,18 9.5,21.5 13,18"/></svg>
<div class="a" style="left:2526px;top:294px;width:243px;height:32px;border-radius:7px;background:#fff;box-shadow:0 1px 1px rgba(0,0,0,.15);font-size:23.8px;color:#1a1a1a;text-align:center;line-height:33px">Refresh background</div>
<div class="a" style="left:2530px;top:334px;width:24px;height:24px;border-radius:5px;background:#5B8DEF"></div>
<svg class="a" style="left:2530px;top:334px" width="24" height="24" fill="none" stroke="#fff" stroke-width="2.6" stroke-linecap="round" stroke-linejoin="round"><polyline points="6,12.5 10.5,18 18,5"/></svg>
<div class="lbl" style="left:2557px;top:329.5px;font-size:28px">show</div>

<div class="box" style="top:415.0px;height:389.0px"></div>
<div class="hd" style="left:2526.5px;top:437.0px">Background stars 1</div>
<div class="lbl" style="left:2526.5px;top:483.5px">arms number</div>
<div class="trk" style="top:550.0px"></div>
<div class="thm" style="left:2650.7px;top:546.0px"></div>
<div class="inp" style="top:536.0px;width:69.5px"></div>
<div class="spn" style="left:2837.6px;top:542.0px"></div>
<svg class="a" style="left:2837.6px;top:542.0px" width="19" height="27" fill="none" stroke="#222" stroke-width="1.7" stroke-linecap="round" stroke-linejoin="round"><polyline points="6,9 9.5,5.5 13,9"/><line x1="2" y1="13.5" x2="17" y2="13.5" stroke="#e4e4e4" stroke-width="1"/><polyline points="6,18 9.5,21.5 13,18"/></svg>
<div class="lbl" style="left:2526.5px;top:587.8px">radius1</div>
<div class="trk" style="top:654.3px"></div>
<div class="thm" style="left:2539.5px;top:650.3px"></div>
<div class="inp" style="top:640.3px;width:111.5px">5</div>
<div class="spn" style="left:2879.0px;top:646.3px"></div>
<svg class="a" style="left:2879.0px;top:646.3px" width="19" height="27" fill="none" stroke="#222" stroke-width="1.7" stroke-linecap="round" stroke-linejoin="round"><polyline points="6,9 9.5,5.5 13,9"/><line x1="2" y1="13.5" x2="17" y2="13.5" stroke="#e4e4e4" stroke-width="1"/><polyline points="6,18 9.5,21.5 13,18"/></svg>
<div class="lbl" style="left:2526.5px;top:692.1px">radius2</div>
<div class="trk" style="top:758.6px"></div>
<div class="thm" style="left:2563.5px;top:754.6px"></div>
<div class="inp" style="top:744.6px;width:111.5px">15</div>
<div class="spn" style="left:2879.0px;top:750.6px"></div>
<svg class="a" style="left:2879.0px;top:750.6px" width="19" height="27" fill="none" stroke="#222" stroke-width="1.7" stroke-linecap="round" stroke-linejoin="round"><polyline points="6,9 9.5,5.5 13,9"/><line x1="2" y1="13.5" x2="17" y2="13.5" stroke="#e4e4e4" stroke-width="1"/><polyline points="6,18 9.5,21.5 13,18"/></svg>
<div class="box" style="top:832.4px;height:389.0px"></div>
<div class="hd" style="left:2526.5px;top:854.4px">Background stars 2</div>
<div class="lbl" style="left:2526.5px;top:900.9px">arms number</div>
<div class="trk" style="top:967.4px"></div>
<div class="thm" style="left:2550.6px;top:963.4px"></div>
<div class="inp" style="top:953.4px;width:69.5px">7</div>
<div class="spn" style="left:2837.6px;top:959.4px"></div>
<svg class="a" style="left:2837.6px;top:959.4px" width="19" height="27" fill="none" stroke="#222" stroke-width="1.7" stroke-linecap="round" stroke-linejoin="round"><polyline points="6,9 9.5,5.5 13,9"/><line x1="2" y1="13.5" x2="17" y2="13.5" stroke="#e4e4e4" stroke-width="1"/><polyline points="6,18 9.5,21.5 13,18"/></svg>
<div class="lbl" style="left:2526.5px;top:1005.2px">radius1</div>
<div class="trk" style="top:1071.7px"></div>
<div class="thm" style="left:2530.4px;top:1067.7px"></div>
<div class="inp" style="top:1057.7px;width:111.5px">1.5</div>
<div class="spn" style="left:2879.0px;top:1063.7px"></div>
<svg class="a" style="left:2879.0px;top:1063.7px" width="19" height="27" fill="none" stroke="#222" stroke-width="1.7" stroke-linecap="round" stroke-linejoin="round"><polyline points="6,9 9.5,5.5 13,9"/><line x1="2" y1="13.5" x2="17" y2="13.5" stroke="#e4e4e4" stroke-width="1"/><polyline points="6,18 9.5,21.5 13,18"/></svg>
<div class="lbl" style="left:2526.5px;top:1109.5px">radius2</div>
<div class="trk" style="top:1176.0px"></div>
<div class="thm" style="left:2551.9px;top:1172.0px"></div>
<div class="inp" style="top:1162.0px;width:111.5px">10</div>
<div class="spn" style="left:2879.0px;top:1168.0px"></div>
<svg class="a" style="left:2879.0px;top:1168.0px" width="19" height="27" fill="none" stroke="#222" stroke-width="1.7" stroke-linecap="round" stroke-linejoin="round"><polyline points="6,9 9.5,5.5 13,9"/><line x1="2" y1="13.5" x2="17" y2="13.5" stroke="#e4e4e4" stroke-width="1"/><polyline points="6,18 9.5,21.5 13,18"/></svg>
<div class="box" style="top:1251.0px;height:389.0px"></div>
<div class="hd" style="left:2526.5px;top:1273.0px">Background stars 3</div>
<div class="lbl" style="left:2526.5px;top:1319.5px">arms number</div>
<div class="trk" style="top:1386.0px"></div>
<div class="thm" style="left:2572.6px;top:1382.0px"></div>
<div class="inp" style="top:1372.0px;width:69.5px">10</div>
<div class="spn" style="left:2837.6px;top:1378.0px"></div>
<svg class="a" style="left:2837.6px;top:1378.0px" width="19" height="27" fill="none" stroke="#222" stroke-width="1.7" stroke-linecap="round" stroke-linejoin="round"><polyline points="6,9 9.5,5.5 13,9"/><line x1="2" y1="13.5" x2="17" y2="13.5" stroke="#e4e4e4" stroke-width="1"/><polyline points="6,18 9.5,21.5 13,18"/></svg>
<div class="lbl" style="left:2526.5px;top:1423.8px">radius1</div>
<div class="trk" style="top:1490.3px"></div>
<div class="thm" style="left:2534.5px;top:1486.3px"></div>
<div class="inp" style="top:1476.3px;width:111.5px">3</div>
<div class="spn" style="left:2879.0px;top:1482.3px"></div>
<svg class="a" style="left:2879.0px;top:1482.3px" width="19" height="27" fill="none" stroke="#222" stroke-width="1.7" stroke-linecap="round" stroke-linejoin="round"><polyline points="6,9 9.5,5.5 13,9"/><line x1="2" y1="13.5" x2="17" y2="13.5" stroke="#e4e4e4" stroke-width="1"/><polyline points="6,18 9.5,21.5 13,18"/></svg>
<div class="lbl" style="left:2526.5px;top:1528.1px">radius2</div>
<div class="trk" style="top:1594.6px"></div>
<div class="thm" style="left:2552.0px;top:1590.6px"></div>
<div class="inp" style="top:1580.6px;width:111.5px">10</div>
<div class="spn" style="left:2879.0px;top:1586.6px"></div>
<svg class="a" style="left:2879.0px;top:1586.6px" width="19" height="27" fill="none" stroke="#222" stroke-width="1.7" stroke-linecap="round" stroke-linejoin="round"><polyline points="6,9 9.5,5.5 13,9"/><line x1="2" y1="13.5" x2="17" y2="13.5" stroke="#e4e4e4" stroke-width="1"/><polyline points="6,18 9.5,21.5 13,18"/></svg>
<div class="box" style="top:1668.6px;height:197px"></div>
<div class="hd" style="left:2526.5px;top:1690.5px">Animations</div>
<div class="cb" style="top:1743.2px"></div>
<div class="lbl" style="left:2558.5px;top:1734.9px">animate background stars</div>
<div class="cb" style="top:1780.1px"></div>
<div class="lbl" style="left:2558.5px;top:1771.8px">star size animation</div>
<div class="cb" style="top:1816.5px"></div>
<div class="lbl" style="left:2558.5px;top:1808.2px">animate text</div>
<div class="a" style="left:2504.5px;top:1897.7px;width:135.5px;height:32px;border-radius:7px;background:#fff;box-shadow:0 1px 1px rgba(0,0,0,.15);font-size:22px;color:#1a1a1a;text-align:center;line-height:32px">Save PNG</div>

<div class="a" style="left:3089px;top:1153px;width:14.5px;height:778px;border-radius:8px;background:#A9A9A9"></div>
</body></html>
